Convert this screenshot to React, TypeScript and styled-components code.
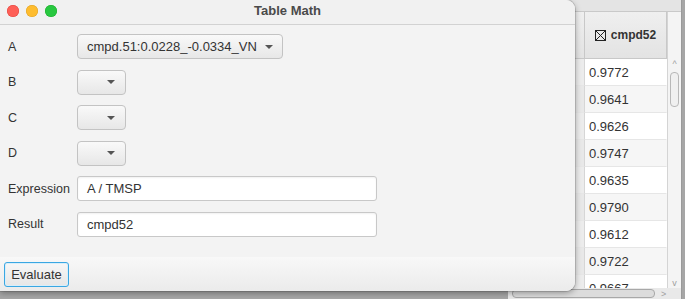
import React from 'react';
import styled, { createGlobalStyle } from 'styled-components';

const GlobalStyle = createGlobalStyle`
  html, body {
    margin: 0;
    padding: 0;
    overflow: hidden;
  }
  body {
    font-family: "Liberation Sans", Arial, sans-serif;
    font-size: 13px;
    color: #2b2b2b;
  }
`;

const Desktop = styled.div`
  position: relative;
  width: 685px;
  height: 299px;
  background: #a6a6a6;
  overflow: hidden;
`;

/* ---------- background table window ---------- */

const TableWindow = styled.div`
  position: absolute;
  left: 508px;
  top: -4px;
  width: 173px;
  height: 303px;
  background: #ececec;
  border-right: 1px solid #9a9a9a;
  display: flex;
  flex-direction: column;
`;

const TableTop = styled.div`
  height: 15px;
  background: #e4e4e4;
  border-bottom: 1px solid #c9c9c9;
`;

const TableBody = styled.div`
  flex: 1;
  display: flex;
  min-height: 0;
`;

const Columns = styled.div`
  flex: 1;
  display: grid;
  grid-template-columns: 77px 1fr;
  grid-auto-rows: 27px;
  grid-template-rows: 47px;
  overflow: hidden;
  align-content: start;
`;

const HeadCell = styled.div`
  display: flex;
  align-items: center;
  justify-content: center;
  gap: 5px;
  background: linear-gradient(#efefef, #e3e3e3);
  border-right: 1px solid #c8c8c8;
  border-bottom: 1px solid #c8c8c8;
  font-size: 12px;
  font-weight: bold;
  color: #333;
`;

const Cell = styled.div<{ $odd: boolean; $side?: boolean }>`
  display: flex;
  align-items: center;
  padding-left: 4px;
  font-size: 13px;
  color: #333;
  border-bottom: 1px solid #e6e6e6;
  border-right: 1px solid ${(p) => (p.$side ? '#d6d6d6' : 'transparent')};
  background: ${(p) =>
    p.$side ? (p.$odd ? '#e8e8e8' : '#ececec') : p.$odd ? '#f6f6f6' : '#ffffff'};
`;

const VScroll = styled.div`
  width: 13px;
  display: flex;
  flex-direction: column;
  align-items: center;
  background: #f4f4f4;
  border-left: 1px solid #d4d4d4;
  padding-top: 47px;
`;

const Arrow = styled.span`
  color: #a0a0a0;
  font-size: 9px;
  line-height: 10px;
`;

const VThumb = styled.div`
  width: 7px;
  height: 33px;
  margin-top: 3px;
  border: 1px solid #b8b8b8;
  border-radius: 4px;
  background: #f0f0f0;
`;

const Grow = styled.div`
  flex: 1;
`;

const HScroll = styled.div`
  height: 11px;
  display: flex;
  align-items: center;
  gap: 6px;
  padding-left: 4px;
  background: #e9e9e9;
`;

const HThumb = styled.div`
  width: 141px;
  height: 7px;
  border: 1px solid #a8a8a8;
  border-radius: 4px;
  background: #dcdcdc;
`;

/* ---------- dialog window ---------- */

const Dialog = styled.div`
  position: absolute;
  left: 0;
  top: 0;
  width: 575px;
  height: 291px;
  background: #f3f3f3;
  border-radius: 0 9px 9px 0;
  box-shadow: 0 2px 6px rgba(0, 0, 0, 0.35), 0 0 0 1px rgba(0, 0, 0, 0.12);
  display: flex;
  flex-direction: column;
  overflow: hidden;
`;

const TitleBar = styled.div`
  position: relative;
  height: 24px;
  flex-shrink: 0;
  display: flex;
  align-items: center;
  justify-content: center;
  background: #f1f1f1;
  border-bottom: 1px solid #d2d2d2;
`;

const Lights = styled.div`
  position: absolute;
  left: 7px;
  top: 5px;
  display: flex;
  gap: 7px;
`;

const Light = styled.span<{ $color: string; $ring: string }>`
  width: 12px;
  height: 12px;
  border-radius: 50%;
  background: ${(p) => p.$color};
  box-shadow: inset 0 0 0 0.5px ${(p) => p.$ring};
`;

const Title = styled.div`
  font-weight: bold;
  font-size: 13px;
  color: #4a4a4a;
  margin-top: -4px;
`;

const Form = styled.div`
  display: grid;
  grid-template-columns: 69px 1fr;
  grid-auto-rows: 25px;
  row-gap: 10.6px;
  padding: 9px 0 0 8px;
  align-items: center;
`;

const Label = styled.span`
  font-size: 12.5px;
  color: #333;
`;

const Combo = styled.div<{ $width: number }>`
  width: ${(p) => p.$width}px;
  height: 25px;
  box-sizing: border-box;
  display: flex;
  align-items: center;
  gap: 8px;
  padding: 0 10px 0 9px;
  border: 1px solid #c3c3c3;
  border-radius: 4px;
  background: linear-gradient(#f9f9f9, #e7e7e7);
  font-size: 13px;
  color: #333;
`;

const Caret = styled.span`
  width: 0;
  height: 0;
  border-left: 4px solid transparent;
  border-right: 4px solid transparent;
  border-top: 4px solid #555;
  margin-left: auto;
`;

const Field = styled.div`
  width: 300px;
  height: 25px;
  box-sizing: border-box;
  display: flex;
  align-items: center;
  padding-left: 9px;
  border: 1px solid #c8c8c8;
  border-radius: 3px;
  background: #fff;
  box-shadow: inset 0 1px 2px rgba(0, 0, 0, 0.06);
  font-size: 13px;
  color: #333;
`;

const Spacer = styled.div`
  flex: 1;
`;

const ButtonBar = styled.div`
  height: 34px;
  flex-shrink: 0;
  display: flex;
  align-items: center;
  padding-left: 4px;
  background: linear-gradient(#f8f8f8, #ebebeb);
`;

const Button = styled.button`
  height: 25px;
  width: 65px;
  box-sizing: border-box;
  padding: 0;
  border: 1px solid #3aa7e2;
  border-radius: 3px;
  box-shadow: inset 0 0 0 1px #d8eefa;
  background: linear-gradient(#f7f7f7, #e6e6e6);
  font-family: "Liberation Sans", Arial, sans-serif;
  font-size: 13px;
  color: #333;
`;

const values = ['0.9772', '0.9641', '0.9626', '0.9747', '0.9635', '0.9790', '0.9612', '0.9722', '0.9667'];

const CheckBox = () => (
  <svg width="11" height="11" viewBox="0 0 11 11">
    <rect x="0.5" y="0.5" width="10" height="10" fill="none" stroke="#222" />
    <path d="M1 1 L10 10 M10 1 L1 10" stroke="#222" strokeWidth="1" />
  </svg>
);

const App = () => {
  return (
    <Desktop>
      <GlobalStyle />
      <TableWindow>
        <TableTop />
        <TableBody>
          <Columns>
            <HeadCell />
            <HeadCell>
              <CheckBox />
              cmpd52
            </HeadCell>
            {values.map((v, i) => (
              <React.Fragment key={v + i}>
                <Cell $odd={i % 2 === 1} $side />
                <Cell $odd={i % 2 === 1}>{v}</Cell>
              </React.Fragment>
            ))}
          </Columns>
          <VScroll>
            <Arrow>^</Arrow>
            <VThumb />
            <Grow />
            <Arrow>v</Arrow>
          </VScroll>
        </TableBody>
        <HScroll>
          <HThumb />
          <Arrow>&gt;</Arrow>
        </HScroll>
      </TableWindow>

      <Dialog>
        <TitleBar>
          <Lights>
            <Light $color="#fe5f57" $ring="#e0443e" />
            <Light $color="#febc2e" $ring="#dea123" />
            <Light $color="#28c840" $ring="#1aab29" />
          </Lights>
          <Title>Table Math</Title>
        </TitleBar>
        <Form>
          <Label>A</Label>
          <Combo $width={206}>
            cmpd.51:0.0228_-0.0334_VN
            <Caret />
          </Combo>
          <Label>B</Label>
          <Combo $width={49}>
            <Caret />
          </Combo>
          <Label>C</Label>
          <Combo $width={49}>
            <Caret />
          </Combo>
          <Label>D</Label>
          <Combo $width={49}>
            <Caret />
          </Combo>
          <Label>Expression</Label>
          <Field>A / TMSP</Field>
          <Label>Result</Label>
          <Field>cmpd52</Field>
        </Form>
        <Spacer />
        <ButtonBar>
          <Button>Evaluate</Button>
        </ButtonBar>
      </Dialog>
    </Desktop>
  );
};

export default App;
